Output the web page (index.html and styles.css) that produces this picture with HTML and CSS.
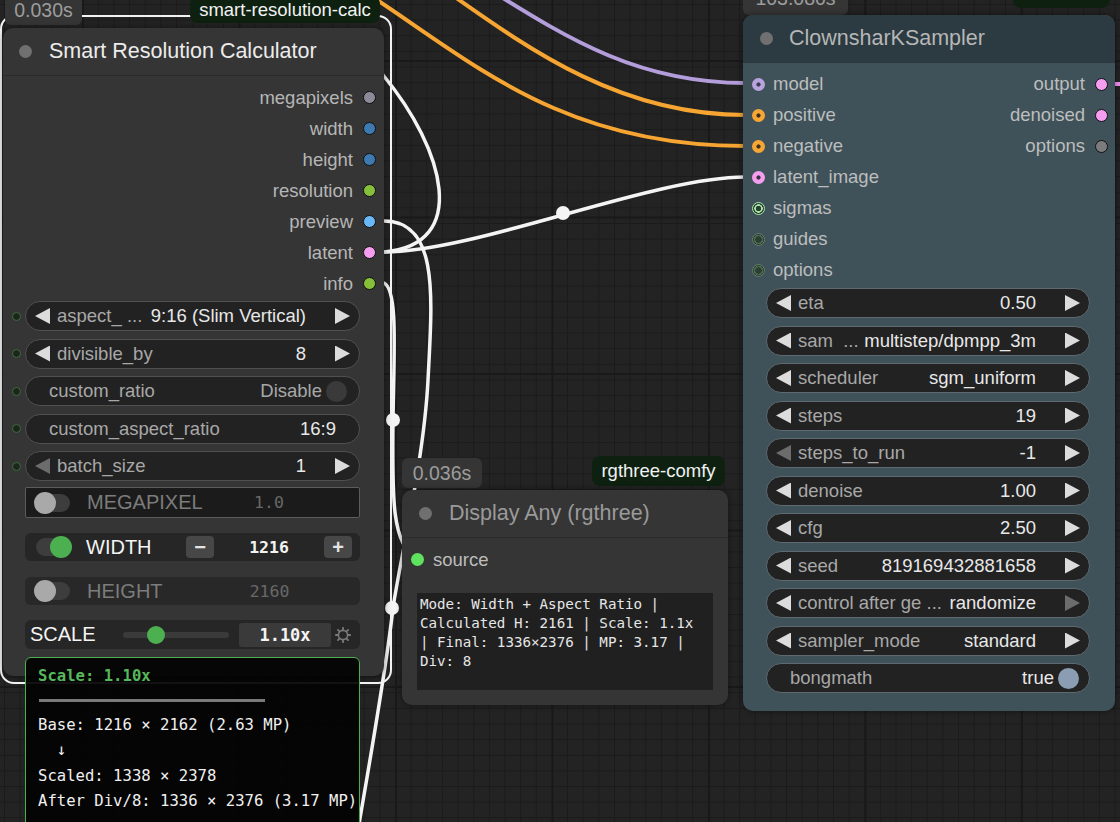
FILE: index.html
```html
<!DOCTYPE html>
<html>
<head>
<meta charset="utf-8">
<title>ComfyUI</title>
<link rel="stylesheet" href="styles.css">
</head>
<body>
<div class="canvas">
  <svg class="wires" width="1120" height="822" viewBox="0 0 1120 822">
    <g fill="none" stroke-linecap="round">
      <path class="wire-purple" d="M490,-10 C570,40 640,83 745,83"/>
      <path class="wire-orange" d="M445,-10 C530,50 620,115 745,115"/>
      <path class="wire-orange" d="M365,-8 C470,60 560,146 745,146"/>
      <path class="wire-pink" d="M1108,84 L1125,84"/>
      <path class="wire-white" d="M384,252 C476,252 653,177 745,177"/>
      <path class="wire-white" d="M384,252 C470,245 445,150 383,75 L370,55"/>
      <path class="wire-white" d="M384,221 C440,221 432,300 428,380 C424,460 400,560 393,608 C386,670 370,760 358,830"/>
      <path class="wire-white" d="M384,283 C398,290 394,350 393,420 C392,500 392,545 417,559"/>
    </g>
    <circle class="wire-dot" cx="563" cy="213" r="7"/>
    <circle class="wire-dot" cx="393" cy="420" r="7"/>
    <circle class="wire-dot" cx="392" cy="608" r="7"/>
  </svg>

  <div class="selection"></div>
  <div class="badge time b-t1">0.030s</div>
  <div class="badge pack b-p1">smart-resolution-calc</div>

  <div class="node n-smart">
    <div class="title"><span class="tdot"></span><span class="ttext bright">Smart Resolution Calculator</span></div>
    <div class="outputs">
      <div class="orow"><span>megapixels</span><i class="slot out c-gray"></i></div>
      <div class="orow"><span>width</span><i class="slot out c-blue"></i></div>
      <div class="orow"><span>height</span><i class="slot out c-blue"></i></div>
      <div class="orow"><span>resolution</span><i class="slot out c-green"></i></div>
      <div class="orow"><span>preview</span><i class="slot out c-lblue"></i></div>
      <div class="orow"><span>latent</span><i class="slot out c-pink"></i></div>
      <div class="orow"><span>info</span><i class="slot out c-green"></i></div>
    </div>
    <div class="widgets w-left">
      <div class="wrow"><i class="wslot"></i>
        <div class="pill"><span class="arr al"></span><span class="lbl">aspect_ ...</span><span class="val">9:16 (Slim Vertical)</span><span class="arr ar"></span></div>
      </div>
      <div class="wrow"><i class="wslot"></i>
        <div class="pill"><span class="arr al"></span><span class="lbl">divisible_by</span><span class="val">8</span><span class="arr ar"></span></div>
      </div>
      <div class="wrow"><i class="wslot"></i>
        <div class="pill plain"><span class="lbl">custom_ratio</span><span class="val dim">Disable</span><span class="knob off"></span></div>
      </div>
      <div class="wrow"><i class="wslot"></i>
        <div class="pill plain text"><span class="lbl">custom_aspect_ratio</span><span class="val">16:9</span></div>
      </div>
      <div class="wrow"><i class="wslot"></i>
        <div class="pill"><span class="arr al off"></span><span class="lbl">batch_size</span><span class="val">1</span><span class="arr ar"></span></div>
      </div>
    </div>

    <div class="cw cw-mp">
      <span class="tog"><span class="tknob"></span></span>
      <span class="cwl dimtext">MEGAPIXEL</span>
      <span class="btn hidden">−</span><span class="cwv dimval">1.0</span><span class="btn hidden">+</span>
    </div>
    <div class="cw cw-w">
      <span class="tog on"><span class="tknob"></span></span>
      <span class="cwl">WIDTH</span>
      <span class="btn">−</span><span class="cwv">1216</span><span class="btn">+</span>
    </div>
    <div class="cw cw-h">
      <span class="tog"><span class="tknob"></span></span>
      <span class="cwl dimtext">HEIGHT</span>
      <span class="btn hidden">−</span><span class="cwv dimval">2160</span><span class="btn hidden">+</span>
    </div>
    <div class="cw cw-s">
      <span class="scl">SCALE</span>
      <span class="slider"><span class="sknob"></span></span>
      <span class="sval">1.10x</span>
      <svg class="gear" width="16" height="16" viewBox="0 0 16 16">
        <circle cx="8" cy="8" r="4.6" fill="none" stroke="#7a7a7a" stroke-width="1.6"/>
        <g stroke="#7a7a7a" stroke-width="1.8" stroke-linecap="round">
          <line x1="8" y1="0.8" x2="8" y2="2.6"/><line x1="8" y1="13.4" x2="8" y2="15.2"/>
          <line x1="0.8" y1="8" x2="2.6" y2="8"/><line x1="13.4" y1="8" x2="15.2" y2="8"/>
          <line x1="2.9" y1="2.9" x2="4.2" y2="4.2"/><line x1="11.8" y1="11.8" x2="13.1" y2="13.1"/>
          <line x1="2.9" y1="13.1" x2="4.2" y2="11.8"/><line x1="11.8" y1="4.2" x2="13.1" y2="2.9"/>
        </g>
      </svg>
    </div>
  </div>

  <div class="tooltip">
    <div class="tt-head">Scale: 1.10x</div>
    <div class="tt-bar"></div>
    <div class="tt-line">Base: 1216 × 2162 (2.63 MP)</div>
    <div class="tt-line pre">  ↓</div>
    <div class="tt-line">Scaled: 1338 × 2378</div>
    <div class="tt-line">After Div/8: 1336 × 2376 (3.17 MP)</div>
  </div>

  <div class="badge time b-t2">0.036s</div>
  <div class="badge pack b-p2">rgthree-comfy</div>
  <div class="node n-display">
    <div class="title"><span class="tdot"></span><span class="ttext muted">Display Any (rgthree)</span></div>
    <div class="io-src"><i class="slot in c-src"></i><span>source</span></div>
    <div class="display-text">Mode: Width + Aspect Ratio | Calculated H: 2161 | Scale: 1.1x | Final: 1336×2376 | MP: 3.17 | Div: 8</div>
  </div>

  <div class="badge time b-t3">103.080s</div>
  <div class="badge pack b-p3">RES4LYF</div>
  <div class="node n-sampler">
    <div class="title"><span class="tdot"></span><span class="ttext soft">ClownsharKSampler</span></div>
    <div class="io">
      <div class="iorow"><i class="slot in conn c-lav"></i><span class="il">model</span><span class="ol">output</span><i class="slot out c-pink"></i></div>
      <div class="iorow"><i class="slot in conn c-orange"></i><span class="il">positive</span><span class="ol">denoised</span><i class="slot out c-pink"></i></div>
      <div class="iorow"><i class="slot in conn c-orange"></i><span class="il">negative</span><span class="ol">options</span><i class="slot out c-dgray"></i></div>
      <div class="iorow"><i class="slot in conn c-pink"></i><span class="il">latent_image</span></div>
      <div class="iorow"><i class="slot in ring bright-ring"></i><span class="il">sigmas</span></div>
      <div class="iorow"><i class="slot in ring"></i><span class="il">guides</span></div>
      <div class="iorow"><i class="slot in ring"></i><span class="il">options</span></div>
    </div>
    <div class="widgets w-right">
      <div class="pill"><span class="arr al"></span><span class="lbl">eta</span><span class="val">0.50</span><span class="arr ar"></span></div>
      <div class="pill"><span class="arr al"></span><span class="lbl">sam &nbsp;...</span><span class="val">multistep/dpmpp_3m</span><span class="arr ar"></span></div>
      <div class="pill"><span class="arr al"></span><span class="lbl">scheduler</span><span class="val">sgm_uniform</span><span class="arr ar"></span></div>
      <div class="pill"><span class="arr al"></span><span class="lbl">steps</span><span class="val">19</span><span class="arr ar"></span></div>
      <div class="pill"><span class="arr al off"></span><span class="lbl">steps_to_run</span><span class="val">-1</span><span class="arr ar"></span></div>
      <div class="pill"><span class="arr al"></span><span class="lbl">denoise</span><span class="val">1.00</span><span class="arr ar"></span></div>
      <div class="pill"><span class="arr al"></span><span class="lbl">cfg</span><span class="val">2.50</span><span class="arr ar"></span></div>
      <div class="pill"><span class="arr al"></span><span class="lbl">seed</span><span class="val">819169432881658</span><span class="arr ar"></span></div>
      <div class="pill"><span class="arr al"></span><span class="lbl">control after ge ...</span><span class="val">randomize</span><span class="arr ar off"></span></div>
      <div class="pill"><span class="arr al"></span><span class="lbl">sampler_mode</span><span class="val">standard</span><span class="arr ar"></span></div>
      <div class="pill plain"><span class="lbl">bongmath</span><span class="val">true</span><span class="knob on"></span></div>
    </div>
  </div>
</div>
</body>
</html>
```

FILE: styles.css
```css
* { box-sizing: border-box; }
html, body { margin: 0; padding: 0; }
body {
  background: #222;
  font-family: "Liberation Sans", Arial, sans-serif;
  color: #ddd;
}
.canvas {
  position: relative;
  width: 1120px;
  height: 822px;
  overflow: hidden;
  background-color: #232323;
  background-image:
    linear-gradient(90deg, #191919 2px, transparent 2px),
    linear-gradient(#191919 2px, transparent 2px),
    linear-gradient(90deg, #1b1b1b 1px, transparent 1px),
    linear-gradient(#1b1b1b 1px, transparent 1px);
  background-size: 156.5px 156.5px, 156.5px 156.5px, 15.65px 15.65px, 15.65px 15.65px;
  background-position: 82px 60px, 82px 60px, 4px 4px, 4px 4px;
}

/* wires */
.wires { position: absolute; left: 0; top: 0; z-index: 0; }
.wire-purple { stroke: #b39ddb; stroke-width: 4; }
.wire-orange { stroke: #f6a532; stroke-width: 4; }
.wire-pink { stroke: #f28ff0; stroke-width: 4; }
.wire-white { stroke: #f4f4f4; stroke-width: 3.5; }
.wire-dot { fill: #f4f4f4; }

/* selection outline */
.selection {
  position: absolute;
  left: 0; top: 15px;
  width: 392px; height: 669px;
  border: 2px solid #f2f2f2;
  border-radius: 14px;
  z-index: 1;
}

/* badges */
.badge {
  position: absolute;
  z-index: 2;
  display: flex;
  align-items: center;
  justify-content: center;
  white-space: nowrap;
}
.badge.time { background: #353535; color: #9c9c9c; font-size: 19.5px; border-radius: 6px; }
.badge.pack { background: #0e2111; color: #f2f2f2; font-size: 18.5px; border-radius: 8px; }
.b-t1 { left: 5px; top: -5px; width: 77px; height: 30px; }
.b-p1 { left: 190px; top: -4px; width: 190px; height: 27px; }
.b-t2 { left: 402px; top: 458px; width: 80px; height: 30px; }
.b-p2 { left: 592px; top: 456px; width: 133px; height: 30px; border-radius: 9px; }
.b-t3 { left: 743px; top: -18px; width: 105px; height: 33px; }
.b-p3 { left: 1013px; top: -20px; width: 97px; height: 28px; }

/* nodes */
.node {
  position: absolute;
  z-index: 2;
  background: #353535;
  border-radius: 10px;
  box-shadow: 0 0 6px rgba(0,0,0,0.45);
  overflow: hidden;
}
.title {
  height: 48px;
  display: flex;
  align-items: center;
  border-bottom: 1px solid #2b2b2b;
  padding-left: 16px;
}
.tdot { width: 13px; height: 13px; border-radius: 50%; background: #707070; flex: none; }
.ttext { font-size: 21.5px; margin-left: 17px; white-space: nowrap; }
.ttext.bright { color: #ececec; }
.ttext.muted { color: #9a9a9a; }
.ttext.soft { color: #b6b6b6; }

/* slots */
.slot { display: block; width: 13px; height: 13px; border-radius: 50%; flex: none; }
.slot.out { border: 1.5px solid #111; }
.c-gray { background: #8c8a99; }
.c-blue { background: #3d7ab0; }
.c-green { background: #86c03a; }
.c-lblue { background: #6ab7f5; }
.c-pink { background: #f59ef0; }
.c-dgray { background: #7c7c7c; }
.c-src { background: #5fe35f; }
.slot.conn.c-lav { background: radial-gradient(circle, #3b3b50 0 1.8px, #b8a3df 2.4px); }
.slot.conn.c-orange { background: radial-gradient(circle, #3a3020 0 1.8px, #f7a634 2.4px); }
.slot.conn.c-pink { background: radial-gradient(circle, #40303f 0 1.8px, #f59ef0 2.4px); }
.slot.ring { background: radial-gradient(circle, #2c3d31 0 3px, #4d6a54 3.5px 4.5px, #2c3d31 5px); border: 1.5px solid #5f7f63; }
.slot.ring.bright-ring { background: radial-gradient(circle, #2c3d31 0 2.5px, #a8e6a8 3px 4px, #2c3d31 4.5px); border: 1.5px solid #a8e6a8; }

/* smart resolution node */
.n-smart { left: 3px; top: 28px; width: 381px; height: 648px; }
.outputs { padding-top: 6px; }
.orow {
  height: 31px;
  display: flex;
  align-items: center;
  justify-content: flex-end;
  padding-right: 8.5px;
  font-size: 18.5px;
  color: #b6b6b6;
}
.orow .slot { margin-left: 9.5px; }

.widgets { display: flex; flex-direction: column; gap: 7.5px; }
.w-left { margin-top: 2px; }
.wrow { display: flex; align-items: center; padding-left: 9px; }
.wslot {
  display: block; width: 9px; height: 9px; border-radius: 50%;
  border: 1.5px solid #3d6e3d; background: #1d261d; margin-right: 4px; flex: none;
}
.pill {
  display: flex;
  align-items: center;
  width: 335px;
  height: 30px;
  background: #222;
  border: 1px solid #505050;
  border-radius: 15px;
  padding: 0 9px;
  font-size: 18.5px;
  white-space: nowrap;
}
.arr { display: block; width: 15px; height: 16px; background: #dcdcdc; flex: none; }
.arr.al { clip-path: polygon(100% 0, 100% 100%, 0 50%); }
.arr.ar { clip-path: polygon(0 0, 100% 50%, 0 100%); }
.arr.off { background: #6c6c6c; }
.lbl { color: #a8a8a8; flex: 1; margin-left: 7px; overflow: hidden; }
.val { color: #e8e8e8; margin-right: 29px; }
.pill.plain { padding: 0 12px 0 23px; }
.pill.plain .lbl { margin-left: 0; }
.pill.plain .val { margin-right: 0; }
.pill.plain.text { padding-right: 23px; }
.val.dim { color: #a8a8a8; }
.knob { display: block; width: 21px; height: 21px; border-radius: 50%; margin-left: 4px; flex: none; }
.knob.off { background: #3a3a3a; }
.knob.on { background: #8a9db3; }

/* custom widgets */
.cw {
  display: flex;
  align-items: center;
  width: 335px;
  margin-left: 22px;
  font-size: 20px;
}
.cw-mp { margin-top: 6px; height: 31px; background: #1b1b1b; border: 1px solid #5c5c5c; border-radius: 2px; padding: 0 8px 0 9px; }
.cw-w { margin-top: 15px; height: 28px; background: #262626; border-radius: 6px; padding: 0 8px 0 11px; }
.cw-h { margin-top: 16px; height: 28px; background: #282828; border-radius: 6px; padding: 0 8px 0 10px; }
.cw-s { margin-top: 15px; height: 29px; background: #262626; border-radius: 6px; padding: 0 0 0 5px; }
.tog {
  display: flex; align-items: center; justify-content: flex-start;
  width: 35px; height: 18px; border-radius: 9px; background: #3d3d3d; flex: none;
}
.tog.on { justify-content: flex-end; }
.tknob { display: block; width: 22px; height: 22px; border-radius: 50%; background: #a9a9a9; margin-left: -1px; flex: none; }
.tog.on .tknob { background: #4caf50; margin-left: 0; margin-right: -1px; }
.cwl { width: 100px; margin-left: 17px; color: #f4f4f4; flex: none; }
.cw-w .cwl { margin-left: 15px; }
.cwl.dimtext { color: #7c7c7c; }
.btn {
  display: flex; align-items: center; justify-content: center;
  width: 28px; height: 22px; border-radius: 4px; background: #474747;
  color: #e4e4e4; font-size: 20px; font-weight: bold; flex: none;
}
.btn.hidden { visibility: hidden; }
.cwv {
  flex: 1; text-align: center;
  font-family: "DejaVu Sans Mono", "Liberation Mono", monospace;
  font-size: 16.5px; font-weight: bold; color: #f2f2f2;
}
.cwv.dimval { font-weight: normal; color: #686868; }
.scl { width: 93px; color: #f4f4f4; flex: none; }
.slider {
  display: flex; align-items: center;
  width: 106px; height: 6px; border-radius: 3px; background: #3a3a3a; flex: none;
}
.sknob { display: block; width: 18px; height: 18px; border-radius: 50%; background: #4caf50; margin-left: 24px; flex: none; }
.sval {
  display: flex; align-items: center; justify-content: center;
  width: 92px; height: 24px; margin-left: 10px; border-radius: 3px; background: #3a3a3a;
  font-family: "DejaVu Sans Mono", "Liberation Mono", monospace;
  font-size: 17px; font-weight: bold; color: #f4f4f4; flex: none;
}
.gear { margin-left: 4px; flex: none; }

/* tooltip */
.tooltip {
  position: absolute;
  z-index: 3;
  left: 25px; top: 657px;
  width: 335px; height: 190px;
  background: rgba(3,3,3,0.94);
  border: 1px solid #4caf50;
  border-radius: 6px;
  padding: 6px 0 0 12px;
  font-family: "DejaVu Sans Mono", "Liberation Mono", monospace;
  font-size: 15.6px;
  color: #f0f0f0;
}
.tt-head { line-height: 25px; color: #56b85a; font-weight: bold; }
.tt-bar { width: 226px; height: 3px; background: #7a7a7a; margin: 10px 0 11px 1px; }
.tt-line { line-height: 25.3px; white-space: nowrap; }
.tt-line.pre { white-space: pre; }

/* display any node */
.n-display { left: 402px; top: 490px; width: 326px; height: 215px; }
.n-display .title { padding-left: 16.5px; }
.n-display .ttext { margin-left: 17.5px; }
.io-src {
  display: flex; align-items: center; height: 31px; margin-top: 6px;
  padding-left: 8.5px; font-size: 18.5px; color: #bdbdbd;
}
.io-src span { margin-left: 9.5px; }
.display-text {
  margin: 18px 0 0 15px;
  width: 296px; height: 97px;
  background: #202020;
  padding: 2px 12px 0 3px;
  font-family: "DejaVu Sans Mono", "Liberation Mono", monospace;
  font-size: 14.2px;
  line-height: 19px;
  color: #e6e6e6;
}

/* sampler node */
.n-sampler { left: 743px; top: 15px; width: 372px; height: 696px; background: #3f525a; }
.n-sampler .title { background: #2c3b41; border-bottom: 1px solid #2a373c; padding-left: 16.5px; }
.n-sampler .ttext { margin-left: 16.5px; }
.io { padding-top: 5.5px; }
.iorow {
  display: flex; align-items: center; height: 31px;
  padding: 0 7.5px 0 8.5px; font-size: 18.5px; color: #bdbdbd;
}
.il { margin-left: 8.5px; flex: 1; }
.ol { margin-right: 9.5px; }
.w-right { margin-top: 2.5px; padding-left: 23px; }
.w-right .pill { width: 324px; border-color: #5e6a6f; }
.w-right .pill.plain { padding-left: 23px; padding-right: 10px; }
```
